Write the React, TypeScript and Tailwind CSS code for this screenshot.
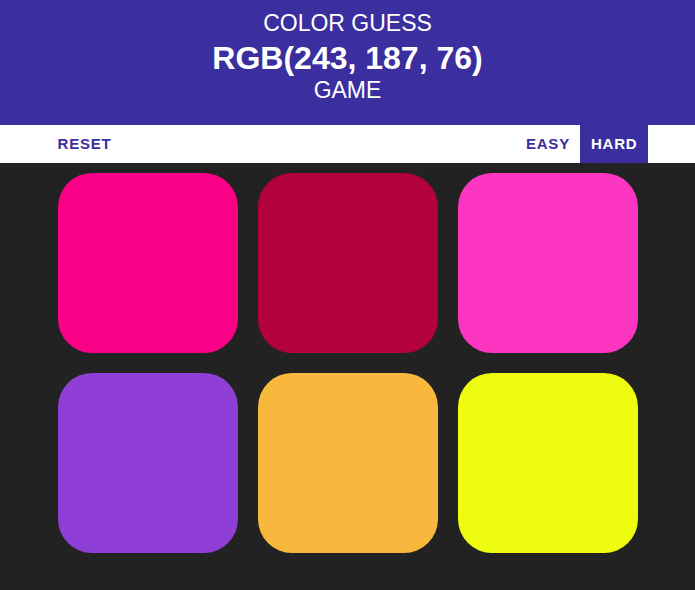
const colors = ["#fa0087", "#b3003f", "#fc36c0", "#8f3fd6", "#f8b83d", "#eefd0f"];

export default function App() {
  return (
    <div className="min-h-[590px] bg-[#222222] font-['Liberation_Sans',Arial,sans-serif]">
      {/* header */}
      <header className="h-[125px] bg-[#3b2e9e] text-white text-center flex flex-col items-center pt-[7px]">
        <div className="text-[23px] leading-[33px] uppercase">Color Guess</div>
        <div className="text-[32px] leading-[36px] font-bold">RGB(243, 187, 76)</div>
        <div className="text-[23px] leading-[29px] uppercase">Game</div>
      </header>

      {/* stripe */}
      <nav className="h-[38px] bg-white">
        <div className="max-w-[600px] mx-auto h-full flex items-stretch justify-between pl-[10px]">
          <button className="uppercase font-bold text-[15px] tracking-[0.8px] text-[#3b2e9e]">Reset</button>
          <div className="flex items-stretch">
            <button className="uppercase font-bold text-[15px] tracking-[0.8px] text-[#3b2e9e] px-[10px]">Easy</button>
            <button className="uppercase font-bold text-[15px] tracking-[0.8px] text-white bg-[#3b2e9e] pl-[11px] pr-[10px]">Hard</button>
          </div>
        </div>
      </nav>

      {/* squares */}
      <div className="max-w-[600px] mx-auto grid grid-cols-3 gap-x-[20px] gap-y-[20px] px-[10px] pt-[10px]">
        {colors.map((c) => (
          <div key={c} className="h-[180px] rounded-[34px]" style={{ backgroundColor: c }} />
        ))}
      </div>
    </div>
  );
}
